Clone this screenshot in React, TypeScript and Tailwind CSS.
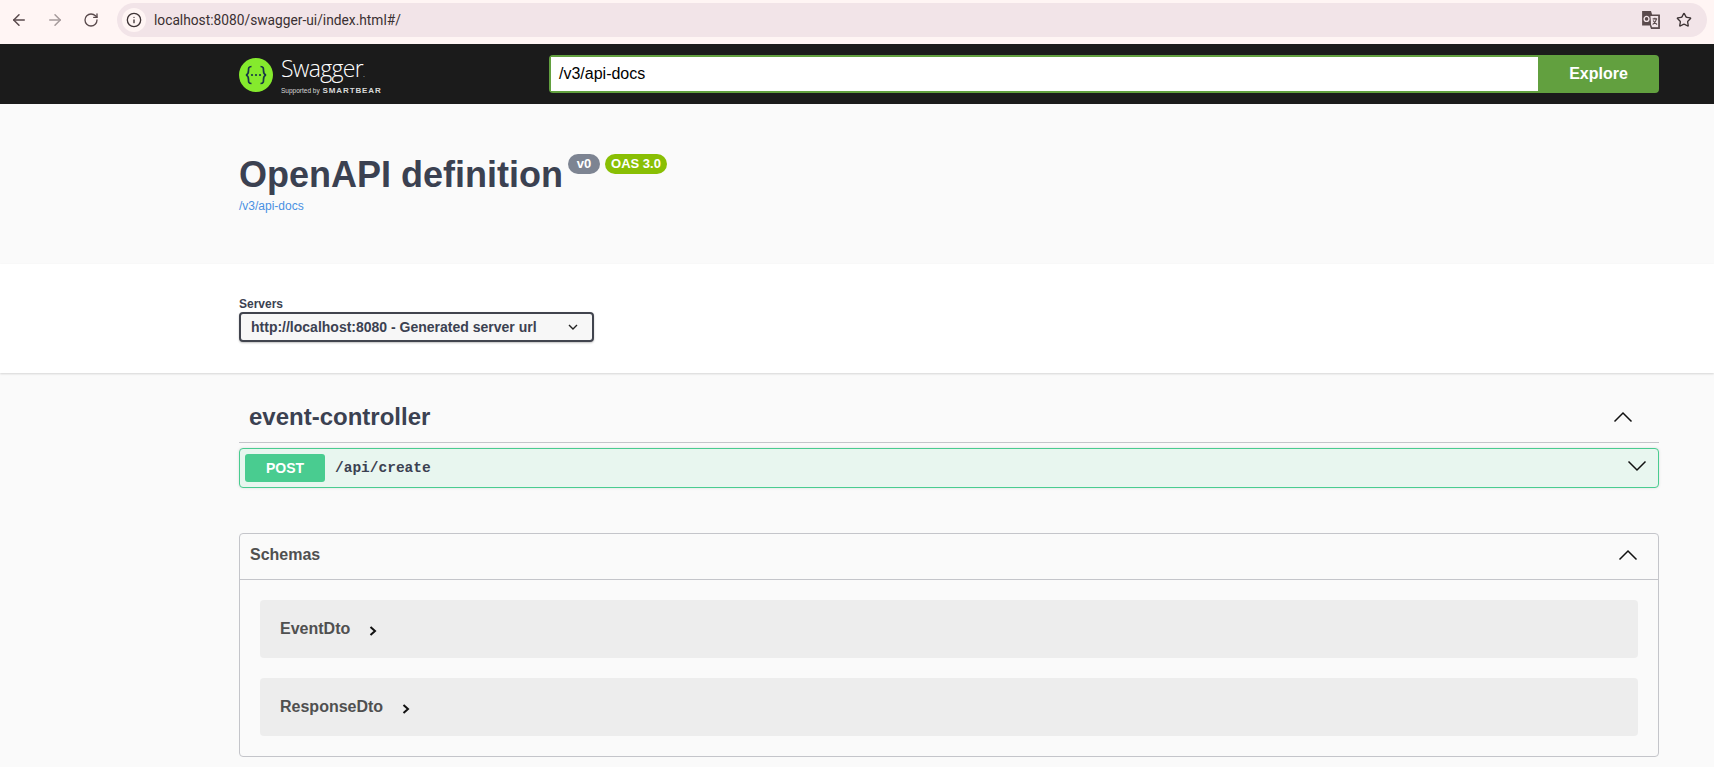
import React from "react";
import { ArrowLeft, ArrowRight, RotateCw, Info, Star } from "lucide-react";

function Chevron({ dir, className }: { dir: "up" | "down"; className?: string }) {
  return (
    <svg viewBox="0 0 20 12" fill="none" stroke="#111" strokeWidth="1.5" className={className}>
      <path d={dir === "up" ? "M1.5 10.5 L10 2 L18.5 10.5" : "M1.5 1.5 L10 10 L18.5 1.5"} />
    </svg>
  );
}

function ModelRow({ name }: { name: string }) {
  return (
    <div className="flex h-[58px] items-center rounded-[4px] bg-[#ededed] pl-5">
      <span className="text-[16px] font-bold text-[#505050]">{name}</span>
      <svg viewBox="0 0 8 10" fill="none" stroke="#111" strokeWidth="2" className="ml-[19px] mt-[3px] h-[10px] w-[8px]">
        <path d="M1.5 1 L6 5 L1.5 9" />
      </svg>
    </div>
  );
}

export default function App() {
  return (
    <div className="h-[767px] w-[1714px] overflow-hidden bg-[#fafafa] font-['Liberation_Sans',sans-serif] text-[#3b4151]">
      {/* Browser toolbar */}
      <div className="flex h-[44px] items-start bg-[#fff5f4] pt-[3px]">
        <div className="flex h-[34px] w-[117px] items-center pl-[10px] text-[#5a4a4c]">
          <ArrowLeft size={18} strokeWidth={2} />
          <ArrowRight size={18} strokeWidth={2} className="ml-[18px] text-[#a59a9b]" />
          <RotateCw size={16} strokeWidth={2} className="ml-[19px]" />
        </div>
        <div className="flex h-[34px] w-[1590px] items-center rounded-full bg-[#f2e4e8] pl-[5px] pr-[15px]">
          <div className="flex h-[24px] w-[24px] items-center justify-center rounded-full bg-[#fff5f4] text-[#3d3335]">
            <Info size={16} strokeWidth={2} />
          </div>
          <span className="ml-[8px] font-['Roboto',sans-serif] text-[13.75px] text-[#3a3032]">localhost:8080/swagger-ui/index.html#/</span>
          <svg viewBox="0 0 18 18" className="ml-auto h-[20px] w-[20px] -translate-x-[2px]">
            <path d="M1 1 h8 l1 3 h7 v13 h-8 l-1-3 h-7 z" fill="#5a4a4c" />
            <path d="M8 5 h8 v11 h-6.5 l-1-3 z" fill="#f2e4e8" stroke="#5a4a4c" strokeWidth="1" />
            <circle cx="5" cy="8" r="2.2" fill="none" stroke="#f2e4e8" strokeWidth="1.2" />
            <path d="M10.5 8 h4 M12.5 7 v1 M14 8 c-.5 2.5-2 4-3.5 5 M11 9.5 c.7 1.5 2 2.8 3.5 3.5" fill="none" stroke="#5a4a4c" strokeWidth="1" />
          </svg>
          <Star size={16} strokeWidth={2} className="ml-[13px] text-[#3d3335]" />
        </div>
      </div>

      {/* Swagger top bar */}
      <div className="h-[60px] bg-[#1b1b1b] pl-[239px] pr-[55px]">
        <div className="flex h-full w-[1420px] items-start">
          <div className="flex w-[310px] items-center pt-[11px]">
            <svg viewBox="0 0 34 34" className="h-[34px] w-[34px] shrink-0">
              <circle cx="17" cy="17" r="17" fill="#85ea2d" />
              <path d="M12.5 8.5 c-3 0-3 1.5-3 4 c0 2.5-.5 4-2.5 4.5 c2 .5 2.5 2 2.5 4.5 c0 2.5 0 4 3 4 M21.5 8.5 c3 0 3 1.5 3 4 c0 2.5.5 4 2.5 4.5 c-2 .5-2.5 2-2.5 4.5 c0 2.5 0 4-3 4" fill="none" stroke="#173647" strokeWidth="1.7" />
              <circle cx="13" cy="17" r="1.1" fill="#173647" />
              <circle cx="17" cy="17" r="1.1" fill="#173647" />
              <circle cx="21" cy="17" r="1.1" fill="#173647" />
            </svg>
            <div className="ml-[8px] flex flex-col text-white">
              <span className="font-['Open_Sans',sans-serif] text-[23px] font-light leading-[26px] tracking-[-0.7px]">Swagger<span className="text-[8px]">.</span></span>
              <span className="whitespace-nowrap text-[6.5px] leading-[8px] text-[#d8d8d8]">Supported by <span className="ml-[1px] text-[8px] font-bold tracking-[0.9px]">SMARTBEAR</span></span>
            </div>
          </div>
          <div className="mt-[11px] flex h-[38px] w-[1110px] overflow-hidden rounded-[4px] bg-[#62a03f]">
            <div className="my-[2px] ml-[2px] flex flex-1 items-center bg-white pl-[8px] text-[16px] text-black">/v3/api-docs</div>
            <div className="flex w-[121px] items-center justify-center text-[16px] font-bold text-white">Explore</div>
          </div>
        </div>
      </div>

      {/* Info */}
      <div className="h-[160px] pl-[239px] pt-[50px]">
        <div className="flex items-start">
          <h1 className="mt-[3px] text-[36px] font-bold leading-[36px] text-[#3b4151]">OpenAPI definition</h1>
          <span className="ml-[5px] flex h-[20px] w-[32px] items-center justify-center rounded-full bg-[#7d8492] text-[13px] font-bold text-white">v0</span>
          <span className="ml-[5px] flex h-[20px] w-[62px] items-center justify-center rounded-full bg-[#89bf04] text-[13px] font-bold text-white">OAS 3.0</span>
        </div>
        <div className="mt-[6px] text-[12px] leading-[14px] text-[#4990e2]">/v3/api-docs</div>
      </div>

      {/* Servers */}
      <div className="h-[109px] bg-white pl-[239px] pt-[33px] shadow-[0_1px_2px_rgba(0,0,0,0.15)]">
        <div className="text-[12px] font-bold leading-[14px] text-[#3b4151]">Servers</div>
        <div className="mt-[1px] flex h-[30px] w-[355px] items-center rounded-[4px] border-2 border-[#41444e] bg-[#f7f7f7] pl-[10px] shadow-[0_1px_2px_rgba(0,0,0,0.25)]">
          <span className="text-[14px] font-bold text-[#3b4151]">http://localhost:8080 - Generated server url</span>
          <svg viewBox="0 0 10 6" fill="none" stroke="#222" strokeWidth="1.4" className="ml-[31px] h-[6px] w-[10px]">
            <path d="M1 1 L5 5 L9 1" />
          </svg>
        </div>
      </div>

      {/* Main */}
      <div className="ml-[239px] w-[1420px]">
        <div className="flex h-[70px] items-center border-b border-[#c4c5ca] pl-[10px] pr-[26px] pt-[18px]">
          <span className="text-[24px] font-bold text-[#3b4151]">event-controller</span>
          <Chevron dir="up" className="ml-auto h-[12px] w-[20px]" />
        </div>
        <div className="mt-[5px] flex h-[40px] items-center rounded-[4px] border border-[#49cc90] bg-[#e8f6ef] pl-[5px] pr-[11px] shadow-[0_0_3px_rgba(0,0,0,0.12)]">
          <span className="flex h-[28px] w-[80px] items-center justify-center rounded-[3px] bg-[#49cc90] text-[14px] font-bold text-white">POST</span>
          <span className="ml-[10px] mt-[2px] font-['Liberation_Mono',monospace] text-[14.5px] font-bold text-[#3b4151]">/api/create</span>
          <Chevron dir="down" className="mb-[5px] ml-auto h-[12px] w-[20px]" />
        </div>

        <div className="mt-[45px] h-[224px] rounded-[4px] border border-[#c4c5ca]">
          <div className="flex h-[46px] items-center border-b border-[#c4c5ca] pb-[4px] pl-[10px] pr-[20px]">
            <span className="text-[16px] font-bold text-[#505050]">Schemas</span>
            <Chevron dir="up" className="ml-auto h-[12px] w-[20px]" />
          </div>
          <div className="flex flex-col gap-[20px] px-[20px] pt-[20px]">
            <ModelRow name="EventDto" />
            <ModelRow name="ResponseDto" />
          </div>
        </div>
      </div>
    </div>
  );
}
